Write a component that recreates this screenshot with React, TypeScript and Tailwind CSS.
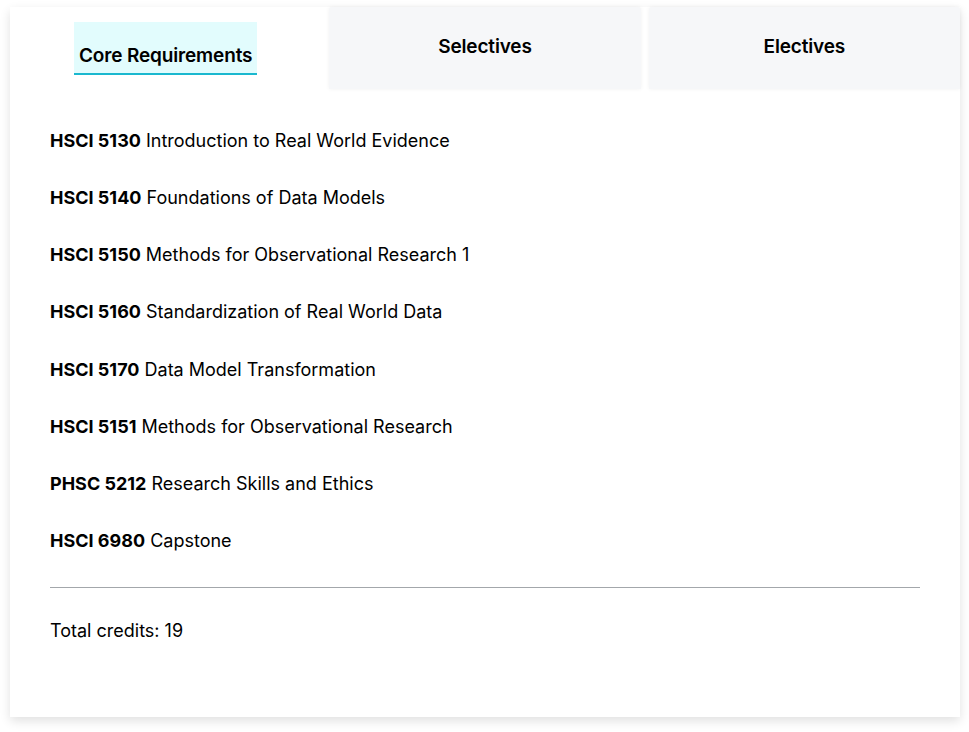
import React from "react";

const courses: [string, string][] = [
  ["HSCI 5130", "Introduction to Real World Evidence"],
  ["HSCI 5140", "Foundations of Data Models"],
  ["HSCI 5150", "Methods for Observational Research 1"],
  ["HSCI 5160", "Standardization of Real World Data"],
  ["HSCI 5170", "Data Model Transformation"],
  ["HSCI 5151", "Methods for Observational Research"],
  ["PHSC 5212", "Research Skills and Ethics"],
  ["HSCI 6980", "Capstone"],
];

export default function App() {
  return (
    <div className="min-h-[732px] w-[969px] bg-white pt-[7px] pl-[10px] font-['Inter',sans-serif] text-black">
      <div className="w-[950px] h-[710px] bg-white shadow-[0_4px_10px_rgba(0,0,0,0.12)] flex flex-col">
        <div className="grid grid-cols-3 gap-[8px] h-[82px]">
          <div className="bg-white flex items-center justify-center">
            <div className="bg-[#e2fcfd] border-b-2 border-[#1ab8cf] px-[5px] pt-[22px] pb-[6px] text-[19px] font-semibold leading-[23px] tracking-[-0.15px]">
              Core Requirements
            </div>
          </div>
          <div className="bg-[#f6f7f9] shadow-[0_0_4px_rgba(0,0,0,0.06)] rounded-t-[3px] flex items-start justify-center pt-[28px] text-[19px] font-semibold leading-[23px] tracking-[-0.15px]">
            Selectives
          </div>
          <div className="bg-[#f6f7f9] shadow-[0_0_4px_rgba(0,0,0,0.06)] rounded-t-[3px] flex items-start justify-center pt-[28px] text-[19px] font-semibold leading-[23px] tracking-[-0.15px]">
            Electives
          </div>
        </div>
        <div className="px-[40px] pt-[41px]">
          <div className="flex flex-col gap-[35.15px]">
            {courses.map(([code, name]) => (
              <div key={code} className="text-[18px] leading-[22px]">
                <span className="font-bold">{code}</span> {name}
              </div>
            ))}
          </div>
          <div className="mt-[35px] border-t border-[#a3a7ab]" />
          <div className="mt-[32px] text-[18px] leading-[22px]">Total credits: 19</div>
        </div>
      </div>
    </div>
  );
}
